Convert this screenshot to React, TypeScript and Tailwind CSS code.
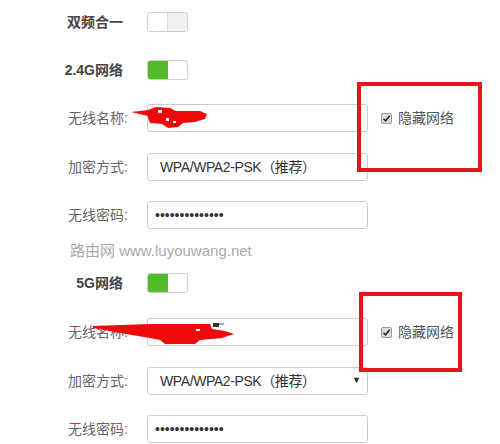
import type { ReactNode } from "react";

const font = { fontFamily: '"Liberation Sans", "Noto Sans CJK SC", sans-serif' };

function Toggle({ on }: { on: boolean }) {
  return (
    <div className="flex h-[20px] w-[41px] overflow-hidden rounded-[3px] border border-[#cfcfcf]">
      <div className={on ? "w-1/2 bg-[#52bb28]" : "w-1/2 bg-white border-r border-[#dcdcdc]"} />
      <div className={on ? "w-1/2 bg-white" : "w-1/2 bg-[#f1f1f1]"} />
    </div>
  );
}

function Row({ label, bold, className, children }: { label: string; bold?: boolean; className?: string; children: ReactNode }) {
  return (
    <div className={"flex h-[28px] items-center " + (className ?? "")}>
      <div
        className={
          "w-[128px] text-right text-[14px] " +
          (bold ? "font-bold text-[#444] pr-[5px]" : "text-[#666]")
        }
      >
        {label}
      </div>
      <div className="ml-[19px] flex items-center">{children}</div>
    </div>
  );
}

function Box({ children }: { children?: ReactNode }) {
  return (
    <div className="flex h-[28px] w-[221px] items-center rounded-[3px] border border-[#cccccc] bg-white">
      {children}
    </div>
  );
}

function HideCheck() {
  return (
    <div className="ml-[13px] flex items-center gap-[6px]">
      <span className="flex h-[11px] w-[11px] items-center justify-center rounded-[2px] border border-[#9a9a9a] bg-[#dedede]">
        <svg width="9" height="9" viewBox="0 0 9 9">
          <path d="M1.5 4.8 L3.6 6.9 L7.6 1.8" fill="none" stroke="#222" strokeWidth="1.6" />
        </svg>
      </span>
      <span className="text-[14px] text-[#555]">隐藏网络</span>
    </div>
  );
}

function Select({ arrow }: { arrow?: boolean }) {
  return (
    <Box>
      <span className="ml-[12px] text-[14px] tracking-[-0.4px] text-[#333]">WPA/WPA2-PSK（推荐）</span>
      <span className="ml-auto mr-[6px] text-[9px] text-[#222]">{arrow ? "▼" : "·"}</span>
    </Box>
  );
}

function Password() {
  return (
    <Box>
      <span className="ml-[7px] text-[14px] text-[#333] leading-none">••••••••••••••</span>
    </Box>
  );
}

export default function App() {
  return (
    <div className="relative h-[444px] w-[500px] overflow-hidden bg-white" style={font}>
      <div className="flex flex-col pt-[8px]">
        <Row label="双频合一" bold>
          <Toggle on={false} />
        </Row>
        <Row label="2.4G网络" bold className="mt-[20px]">
          <Toggle on />
        </Row>
        <Row label="无线名称:" className="mt-[20px]">
          <Box />
          <HideCheck />
        </Row>
        <Row label="加密方式:" className="mt-[21px]">
          <Select />
        </Row>
        <Row label="无线密码:" className="mt-[20px]">
          <Password />
        </Row>
        <div className="mt-[8px] flex h-[28px] items-center pl-[70px] text-[15px] text-[#aaaaaa]">
          路由网 www.luyouwang.net
        </div>
        <Row label="5G网络" bold className="mt-[4px]">
          <Toggle on />
        </Row>
        <Row label="无线名称:" className="mt-[21px]">
          <Box />
          <HideCheck />
        </Row>
        <Row label="加密方式:" className="mt-[21px]">
          <Select arrow />
        </Row>
        <Row label="无线密码:" className="mt-[20px]">
          <Password />
        </Row>
      </div>

      {/* annotation boxes */}
      <div className="absolute left-[357px] top-[82px] h-[90px] w-[125px] border-[4px] border-[#e3161b]" />
      <div className="absolute left-[359px] top-[292px] h-[80px] w-[103px] border-[4px] border-[#e3161b]" />

      {/* redaction scribbles */}
      <svg className="pointer-events-none absolute left-0 top-0" width="500" height="444">
        <polygon
          fill="#ee0a0a"
          points="131,112 148,110 156,107 170,108 176,111 200,111 207,114 205,119 195,122 183,123 178,127 168,128 162,124 150,123 148,118 148,116"
        />
        <rect x="158" y="110" width="4" height="3" fill="#fff" />
        <rect x="166" y="118" width="3" height="3" fill="#fff" />
        <rect x="173" y="121" width="3" height="2" fill="#fff" />
        <polygon
          fill="#ee0a0a"
          points="93,326 150,324 210,324 212,329 225,331 234,334 222,338 200,340 195,344 165,344 160,340 150,338 120,333 93,328"
        />
        <rect x="213" y="323" width="6" height="4" fill="#333" />
        <rect x="219" y="323" width="5" height="2" fill="#9aa" />
        <rect x="196" y="329" width="4" height="2" fill="#fff" />
      </svg>
    </div>
  );
}
